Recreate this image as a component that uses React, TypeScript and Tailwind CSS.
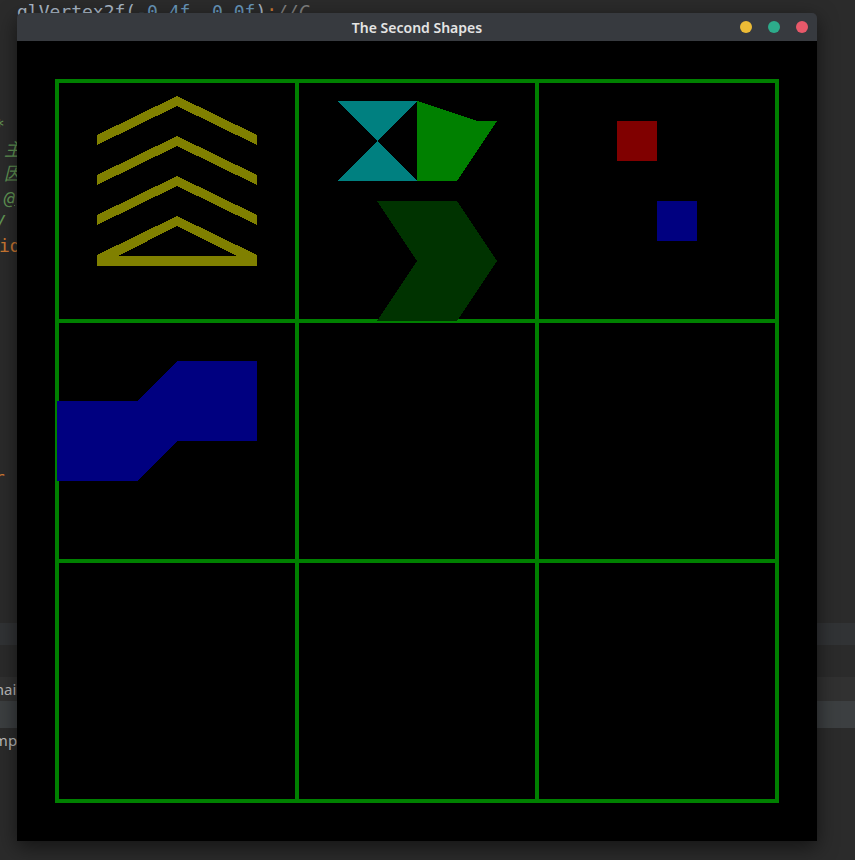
const mono = "font-['DejaVu_Sans_Mono','Liberation_Mono','Noto_Sans_CJK_SC',monospace]";
const sans = "font-['Noto_Sans','DejaVu_Sans',sans-serif]";

function EditorBackdrop() {
  return (
    <div className={`flex flex-col text-[18px] ${mono}`}>
      {/* top code line, mostly hidden behind the window */}
      <div className="h-[24px] pl-[17px] pt-[2px] leading-[20px] whitespace-nowrap">
        <span className="text-[#a9b7c6]">glVertex2f(</span>
        <span className="text-[#6897bb]">-0.4f</span>
        <span className="text-[#a9b7c6]">, </span>
        <span className="text-[#6897bb]">0.0f</span>
        <span className="text-[#a9b7c6]">)</span>
        <span className="text-[#cc7832]">;</span>
        <span className="italic text-[#808080]">//C</span>
      </div>
      <div className="h-[90px]" />
      <div className="h-[24px] leading-[24px] -ml-[6px] italic text-[#629755]">*</div>
      <div className="h-[24px] leading-[24px] pl-[4px] italic text-[#629755]">主</div>
      <div className="h-[24px] leading-[24px] pl-[4px] italic text-[#629755]">因</div>
      <div className="h-[24px] leading-[24px] pl-[4px] italic underline text-[#629755]">@</div>
      <div className="h-[24px] leading-[24px] -ml-[4px] italic text-[#629755]">/</div>
      <div className="h-[24px] leading-[24px] -ml-[1px] text-[#cc7832]">id</div>
      <div className="h-[208px]" />
      <div className="h-[24px] leading-[24px] -ml-[6px] text-[#cc7832]">r</div>
      <div className="h-[133px]" />
      <div className="h-[22px] bg-[#313335]" />
      <div className="h-[32px]" />
      <div className={`h-[24px] bg-[#313131] leading-[24px] text-[15px] text-[#bbbbbb] -ml-[10px] ${sans}`}>main</div>
      <div className="h-[27px] bg-[#3c3f41]" />
      <div className={`h-[24px] leading-[24px] text-[15px] text-[#bbbbbb] -ml-[10px] ${sans}`}>imp</div>
    </div>
  );
}

function Canvas() {
  const lines = [38, 278, 518, 758];
  const chevrons = [0, 40, 80];
  return (
    <svg width="800" height="800" viewBox="0 0 800 800" shapeRendering="crispEdges" className="block">
      {lines.map((p) => (
        <g key={p}>
          <rect x={p} y={38} width={4} height={724} fill="#008000" />
          <rect x={38} y={p} width={724} height={4} fill="#008000" />
        </g>
      ))}

      {/* cell 1: stacked chevrons */}
      {chevrons.map((d) => (
        <polygon
          key={d}
          points={`80,${94 + d} 160,${55 + d} 240,${94 + d} 240,${104 + d} 160,${65 + d} 80,${104 + d}`}
          fill="#808000"
        />
      ))}
      <path d="M80,214 L160,175 L240,214 L240,225 L80,225 Z M101,215 L220,215 L160,185 Z" fill="#808000" fillRule="evenodd" />

      {/* cell 2 */}
      <polygon points="320,60 400,60 360,100" fill="#008080" />
      <polygon points="320,140 400,140 360,100" fill="#008080" />
      <polygon points="400,60 460,80 480,80 440,140 400,140" fill="#008000" />
      <polygon points="360,160 440,160 480,220 440,280 360,280 400,220" fill="#003300" />

      {/* cell 3 */}
      <rect x={600} y={80} width={40} height={40} fill="#800000" />
      <rect x={640} y={160} width={40} height={40} fill="#000080" />

      {/* cell 4 */}
      <polygon points="40,360 120,360 160,320 240,320 240,400 160,400 120,440 40,440" fill="#000080" />
    </svg>
  );
}

function ShapesWindow() {
  return (
    <div className="absolute left-[17px] top-[13px] w-[800px] flex flex-col rounded-t-[5px] overflow-hidden shadow-[0_6px_20px_rgba(0,0,0,0.55)]">
      <div className="relative h-[28px] bg-[#373a3f] flex items-center justify-center">
        <span className={`text-[14px] font-semibold text-[#e4e4e4] ${sans}`}>The Second Shapes</span>
        <div className="absolute right-[9px] top-0 h-full flex items-center gap-[16px]">
          <div className="w-[12px] h-[12px] rounded-full bg-[#ecbb36]" />
          <div className="w-[12px] h-[12px] rounded-full bg-[#2dab8b]" />
          <div className="w-[12px] h-[12px] rounded-full bg-[#e8596a]" />
        </div>
      </div>
      <div className="h-[800px] bg-black">
        <Canvas />
      </div>
    </div>
  );
}

export default function App() {
  return (
    <div className="relative w-[855px] h-[860px] overflow-hidden bg-[#2b2b2b]">
      <EditorBackdrop />
      <ShapesWindow />
    </div>
  );
}
